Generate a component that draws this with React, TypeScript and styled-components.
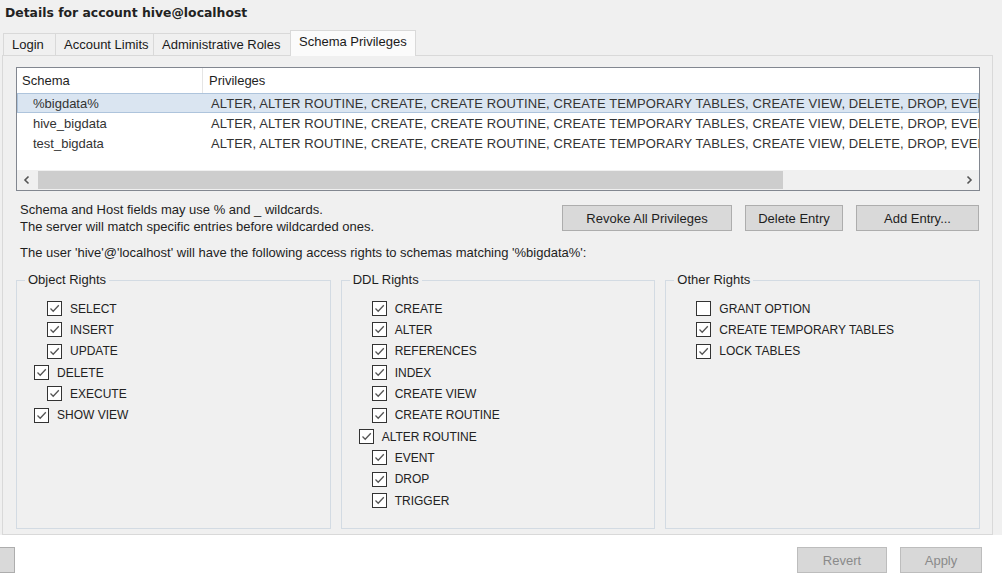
import React from 'react';
import styled, { createGlobalStyle } from 'styled-components';

const GlobalStyle = createGlobalStyle`
  html, body { margin: 0; padding: 0; background: #f0f0f0; }
  body { font-family: "Liberation Sans", Arial, sans-serif; }
  * { box-sizing: border-box; }
`;

const Root = styled.div`
  width: 1002px;
  height: 584px;
  display: flex;
  flex-direction: column;
  background: #f0f0f0;
  color: #1a1a1a;
  font-family: "Liberation Sans", Arial, sans-serif;
  font-size: 13px;
  overflow: hidden;
`;

const Title = styled.div`
  height: 30px;
  padding-left: 5px;
  line-height: 26px;
  font-family: "DejaVu Sans", sans-serif;
  font-weight: bold;
  font-size: 12.4px;
  color: #222;
`;

const TabStrip = styled.div`
  height: 25px;
  display: flex;
  align-items: flex-end;
  padding-left: 3px;
  position: relative;
  z-index: 1;
`;

const Tab = styled.div<{ $active?: boolean; $w: number }>`
  width: ${p => p.$w}px;
  height: ${p => (p.$active ? 26 : 22)}px;
  margin-bottom: ${p => (p.$active ? -1 : 0)}px;
  margin-right: -1px;
  padding-left: 8px;
  padding-bottom: ${p => (p.$active ? 4 : 0)}px;
  display: flex;
  align-items: center;
  border: 1px solid #d9d9d9;
  border-bottom: none;
  background: ${p => (p.$active ? '#fbfbfb' : '#f0f0f0')};
  color: #1a1a1a;
  white-space: nowrap;
`;

const Panel = styled.div`
  margin-left: 2px;
  width: 991px;
  height: 480px;
  border: 1px solid #d9d9d9;
  background: #f0f0f0;
  padding: 11px 12px 5px 13px;
  display: flex;
  flex-direction: column;
`;

const Table = styled.div`
  height: 124px;
  border: 1px solid #828790;
  background: #fff;
  display: flex;
  flex-direction: column;
  overflow: hidden;
  color: #333;
`;

const HeaderRow = styled.div`
  display: flex;
  height: 25px;
  flex: none;
`;

const HeaderCell = styled.div<{ $w?: number; $divider?: boolean }>`
  ${p => (p.$w ? `width: ${p.$w}px; flex: none;` : 'flex: 1;')}
  padding-left: ${p => (p.$divider ? 5 : 6)}px;
  line-height: 25px;
  color: #1e1e1e;
  border-right: ${p => (p.$divider ? '1px solid #e5e5e5' : 'none')};
  white-space: nowrap;
`;

const Row = styled.div<{ $selected?: boolean }>`
  display: flex;
  height: 20px;
  flex: none;
  align-items: center;
  background: ${p => (p.$selected ? '#dae5f1' : 'transparent')};
  box-shadow: ${p => (p.$selected ? 'inset 0 0 0 1px #aec4dc' : 'none')};
`;

const Cell = styled.div<{ $w?: number; $pad: number; $spacing?: number }>`
  ${p => (p.$w ? `width: ${p.$w}px; flex: none;` : 'flex: 1;')}
  padding-left: ${p => p.$pad}px;
  letter-spacing: ${p => p.$spacing ?? 0}px;
  white-space: nowrap;
  overflow: hidden;
`;

const HScroll = styled.div`
  margin-top: auto;
  height: 20px;
  flex: none;
  display: flex;
  background: #f0f0f0;
`;

const ArrowBtn = styled.div`
  width: 20px;
  flex: none;
  display: flex;
  align-items: center;
  justify-content: center;
`;

const Track = styled.div`
  flex: 1;
  padding: 1px 0 1px 1px;
`;

const Thumb = styled.div<{ $w: number }>`
  width: ${p => p.$w}px;
  height: 100%;
  background: #cdcdcd;
`;

const InfoRow = styled.div`
  display: flex;
  justify-content: space-between;
  margin-top: 10px;
`;

const Notes = styled.div`
  line-height: 17px;
  color: #1e1e1e;
  padding-left: 4px;
`;

const ButtonGroup = styled.div`
  display: flex;
  gap: 13px;
  margin-top: 4px;
  margin-right: 1px;
`;

const Button = styled.div<{ $w: number; $disabled?: boolean }>`
  width: ${p => p.$w}px;
  height: 26px;
  display: flex;
  align-items: center;
  justify-content: center;
  background: ${p => (p.$disabled ? '#d8d8d8' : '#d9d9d9')};
  border: 1px solid ${p => (p.$disabled ? '#bdbdbd' : '#adadad')};
  color: ${p => (p.$disabled ? '#8a8a8a' : '#1e1e1e')};
  white-space: nowrap;
`;

const AccessLine = styled.div`
  margin-top: 9px;
  line-height: 17px;
  padding-left: 4px;
  color: #1e1e1e;
`;

const Groups = styled.div`
  flex: 1;
  margin-top: 11px;
  display: grid;
  grid-template-columns: 1fr 1fr 1fr;
  column-gap: 10px;
`;

const Group = styled.fieldset`
  margin: 0;
  min-width: 0;
  padding: 10px 0 0 0;
  border: 1px solid #d3dbe3;
  display: flex;
  flex-direction: column;
`;

const Legend = styled.legend`
  margin-left: 8px;
  padding: 0 3px;
  line-height: 16px;
  font-size: 13px;
  color: #1e1e1e;
`;

const CheckRow = styled.div<{ $level: number }>`
  display: flex;
  align-items: center;
  height: 21.33px;
  padding-left: ${p => (p.$level === 0 ? 17 : 30)}px;
  font-size: 12px;
  color: #222;
  white-space: nowrap;
`;

const Box = styled.span`
  width: 15px;
  height: 15px;
  flex: none;
  border: 1px solid #333;
  background: #fff;
  margin-right: 8px;
  display: flex;
  align-items: center;
  justify-content: center;
`;

const Footer = styled.div`
  height: 49px;
  flex: none;
  background: #fff;
  display: flex;
  align-items: flex-start;
  padding-top: 12px;
  padding-right: 20px;
  gap: 13px;
`;

const StubButton = styled.div`
  width: 15px;
  height: 26px;
  background: #d9d9d9;
  border: 1px solid #adadad;
  border-left: none;
`;

const Spacer = styled.div`
  flex: 1;
`;

const Chevron: React.FC<{ dir: 'left' | 'right' }> = ({ dir }) => (
  <svg width="8" height="10" viewBox="0 0 8 10">
    <polyline
      points={dir === 'left' ? '5.5,1.5 2,5 5.5,8.5' : '2.5,1.5 6,5 2.5,8.5'}
      fill="none"
      stroke="#555"
      strokeWidth="1.6"
    />
  </svg>
);

const Check: React.FC<{ checked: boolean; label: string; level: number }> = ({ checked, label, level }) => (
  <CheckRow $level={level}>
    <Box>
      {checked && (
        <svg width="13" height="13" viewBox="0 0 13 13">
          <polyline points="2.5,6.5 5.2,9.2 10.8,3.2" fill="none" stroke="#555" strokeWidth="1.3" />
        </svg>
      )}
    </Box>
    {label}
  </CheckRow>
);

const privileges =
  'ALTER, ALTER ROUTINE, CREATE, CREATE ROUTINE, CREATE TEMPORARY TABLES, CREATE VIEW, DELETE, DROP, EVENT, EXECUTE, INDEX, INSERT, LOCK TABLES, REFERENCES, SELECT, SHOW VIEW, TRIGGER, UPDATE';

const rows = [
  { schema: '%bigdata%', selected: true },
  { schema: 'hive_bigdata', selected: false },
  { schema: 'test_bigdata', selected: false },
];

type Item = { label: string; level: number; checked: boolean };

const objectRights: Item[] = [
  { label: 'SELECT', level: 1, checked: true },
  { label: 'INSERT', level: 1, checked: true },
  { label: 'UPDATE', level: 1, checked: true },
  { label: 'DELETE', level: 0, checked: true },
  { label: 'EXECUTE', level: 1, checked: true },
  { label: 'SHOW VIEW', level: 0, checked: true },
];

const ddlRights: Item[] = [
  { label: 'CREATE', level: 1, checked: true },
  { label: 'ALTER', level: 1, checked: true },
  { label: 'REFERENCES', level: 1, checked: true },
  { label: 'INDEX', level: 1, checked: true },
  { label: 'CREATE VIEW', level: 1, checked: true },
  { label: 'CREATE ROUTINE', level: 1, checked: true },
  { label: 'ALTER ROUTINE', level: 0, checked: true },
  { label: 'EVENT', level: 1, checked: true },
  { label: 'DROP', level: 1, checked: true },
  { label: 'TRIGGER', level: 1, checked: true },
];

const otherRights: Item[] = [
  { label: 'GRANT OPTION', level: 1, checked: false },
  { label: 'CREATE TEMPORARY TABLES', level: 1, checked: true },
  { label: 'LOCK TABLES', level: 1, checked: true },
];

const groups = [
  { title: 'Object Rights', items: objectRights },
  { title: 'DDL Rights', items: ddlRights },
  { title: 'Other Rights', items: otherRights },
];

const tabs = [
  { label: 'Login', w: 53 },
  { label: 'Account Limits', w: 99 },
  { label: 'Administrative Roles', w: 138 },
  { label: 'Schema Privileges', w: 126, active: true },
];

export default function App() {
  return (
    <Root>
      <GlobalStyle />
      <Title>Details for account hive@localhost</Title>
      <TabStrip>
        {tabs.map(t => (
          <Tab key={t.label} $w={t.w} $active={t.active}>
            {t.label}
          </Tab>
        ))}
      </TabStrip>
      <Panel>
        <Table>
          <HeaderRow>
            <HeaderCell $w={186} $divider>
              Schema
            </HeaderCell>
            <HeaderCell>Privileges</HeaderCell>
          </HeaderRow>
          {rows.map(r => (
            <Row key={r.schema} $selected={r.selected}>
              <Cell $w={186} $pad={16}>
                {r.schema}
              </Cell>
              <Cell $pad={8} $spacing={0.1}>
                {privileges}
              </Cell>
            </Row>
          ))}
          <HScroll>
            <ArrowBtn>
              <Chevron dir="left" />
            </ArrowBtn>
            <Track>
              <Thumb $w={745} />
            </Track>
            <ArrowBtn>
              <Chevron dir="right" />
            </ArrowBtn>
          </HScroll>
        </Table>
        <InfoRow>
          <Notes>
            Schema and Host fields may use % and _ wildcards.
            <br />
            The server will match specific entries before wildcarded ones.
          </Notes>
          <ButtonGroup>
            <Button $w={170}>Revoke All Privileges</Button>
            <Button $w={98}>Delete Entry</Button>
            <Button $w={123}>Add Entry...</Button>
          </ButtonGroup>
        </InfoRow>
        <AccessLine>
          The user 'hive'@'localhost' will have the following access rights to schemas matching '%bigdata%':
        </AccessLine>
        <Groups>
          {groups.map(g => (
            <Group key={g.title}>
              <Legend>{g.title}</Legend>
              {g.items.map(it => (
                <Check key={it.label} label={it.label} level={it.level} checked={it.checked} />
              ))}
            </Group>
          ))}
        </Groups>
      </Panel>
      <Footer>
        <StubButton />
        <Spacer />
        <Button $w={90} $disabled>
          Revert
        </Button>
        <Button $w={82} $disabled>
          Apply
        </Button>
      </Footer>
    </Root>
  );
}
